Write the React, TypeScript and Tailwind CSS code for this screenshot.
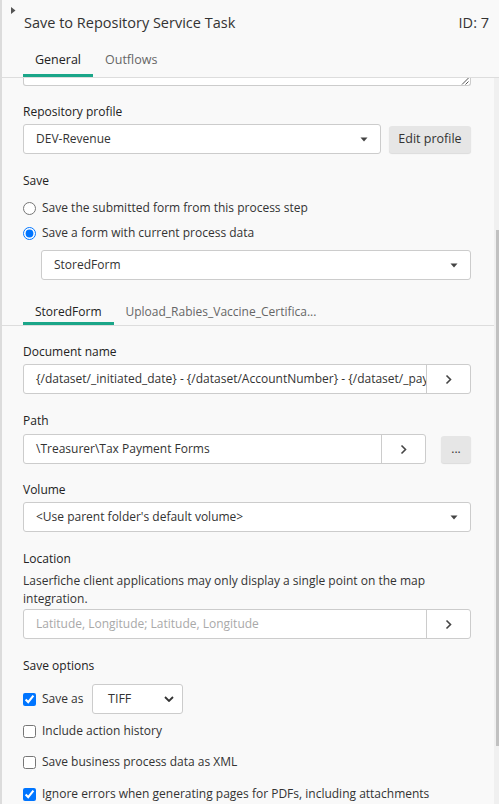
import React from "react";

const font = { fontFamily: '"Open Sans", "Noto Sans", sans-serif' };

function Caret() {
  return (
    <svg width="8" height="5" viewBox="0 0 8 5" className="shrink-0">
      <path d="M0.5 0.5 L7.5 0.5 L4 4.5 Z" fill="#444" />
    </svg>
  );
}

function Chevron() {
  return (
    <svg width="7" height="11" viewBox="0 0 7 11">
      <path d="M1.5 1.5 L5.5 5.5 L1.5 9.5" fill="none" stroke="#444" strokeWidth="1.6" />
    </svg>
  );
}

function Select({ value, className = "" }: { value: string; className?: string }) {
  return (
    <div
      className={`flex h-[30px] items-center justify-between rounded-[3px] border border-[#cccccc] bg-white pl-[12px] pr-[12px] text-[12px] text-[#333] ${className}`}
    >
      <span>{value}</span>
      <Caret />
    </div>
  );
}

function InputBtn({ value, placeholder }: { value?: string; placeholder?: string }) {
  return (
    <div className="flex h-[30px] rounded-[3px] border border-[#cccccc] bg-white text-[12px]">
      <div className="flex min-w-0 flex-1 items-center overflow-hidden whitespace-nowrap pl-[12px]">
        {value ? (
          <span className="text-[#333]">{value}</span>
        ) : (
          <span className="text-[#a9a9a9]">{placeholder}</span>
        )}
      </div>
      <div className="flex w-[44px] shrink-0 items-center justify-center border-l border-[#cccccc]">
        <Chevron />
      </div>
    </div>
  );
}

function Label({ children }: { children: React.ReactNode }) {
  return <div className="text-[12px] leading-[18px] text-[#222]">{children}</div>;
}

function Check({ checked }: { checked?: boolean }) {
  return (
    <input
      type="checkbox"
      defaultChecked={checked}
      className="m-0 h-[13px] w-[13px] shrink-0 accent-[#0075ff]"
    />
  );
}

export default function App() {
  return (
    <div
      style={font}
      className="flex h-[804px] w-full flex-col overflow-hidden border-l-2 border-[#dcdcdc] bg-[#f9f9f9] text-[#333]"
    >
      {/* header */}
      <div className="relative h-[78px] shrink-0 border-b border-[#dddddd]">
        <svg width="5" height="7" viewBox="0 0 5 7" className="absolute left-[9px] top-[7px]">
          <path d="M0 0 L4.5 3.5 L0 7 Z" fill="#555" />
        </svg>
        <div className="flex items-center justify-between pl-[22px] pr-[10px] pt-[12px] text-[14.5px] leading-[22px] text-[#333]">
          <span>Save to Repository Service Task</span>
          <span>ID: 7</span>
        </div>
        <div className="mt-[17px] flex pl-[21px] text-[12.5px] leading-[18px]">
          <div className="border-b-[3px] border-[#1ba689] px-[12px] pb-[5px] text-[#222]">General</div>
          <div className="px-[12px] pb-[5px] text-[#666]">Outflows</div>
        </div>
      </div>

      {/* body */}
      <div className="flex min-h-0 flex-1">
        <div className="min-w-0 flex-1">
          <div className="pl-[21px] pr-[23px]">
            <div className="relative h-[8px] rounded-b-[3px] border-x border-b border-[#cccccc] bg-white">
              <svg width="9" height="7" viewBox="0 0 9 7" className="absolute right-[1px] top-0">
                <path d="M2 6.5 L8.5 0 M5.5 6.5 L8.5 3.5" stroke="#555" strokeWidth="1" />
              </svg>
            </div>

            <div className="mt-[17px]">
              <Label>Repository profile</Label>
              <div className="mt-[3px] flex items-center gap-[8px]">
                <Select value="DEV-Revenue" className="flex-1" />
                <button className="h-[27px] w-[82px] rounded-[3px] bg-[#e6e6e6] text-[12.5px] text-[#333] shadow-[0_1px_1px_rgba(0,0,0,0.12)]">
                  Edit profile
                </button>
              </div>
            </div>

            <div className="mt-[18px]">
              <Label>Save</Label>
              <div className="mt-[9px] flex items-center gap-[6px] text-[12px] leading-[18px]">
                <input type="radio" name="s" className="m-0 h-[13px] w-[13px] accent-[#0075ff]" />
                <span>Save the submitted form from this process step</span>
              </div>
              <div className="mt-[7px] flex items-center gap-[6px] text-[12px] leading-[18px]">
                <input type="radio" name="s" defaultChecked className="m-0 h-[13px] w-[13px] accent-[#0075ff]" />
                <span>Save a form with current process data</span>
              </div>
              <div className="mt-[8px] pl-[18px]">
                <Select value="StoredForm" className="h-[29px]" />
              </div>
            </div>
          </div>

          <div className="mt-[23px] flex border-b border-[#dddddd] pl-[21px] text-[12px] leading-[18px]">
            <div className="border-b-[3px] border-[#1ba689] px-[12px] pb-[1px] text-[#222]">StoredForm</div>
            <div className="px-[12px] pb-[1px] text-[#666]">Upload_Rabies_Vaccine_Certifica...</div>
          </div>

          <div className="pl-[21px] pr-[23px]">
            <div className="mt-[17px]">
              <Label>Document name</Label>
              <div className="mt-[3px]">
                <InputBtn value="{/dataset/_initiated_date} - {/dataset/AccountNumber} - {/dataset/_payment_date}" />
              </div>
            </div>

            <div className="mt-[18px]">
              <Label>Path</Label>
              <div className="mt-[4px] flex items-center gap-[15px]">
                <div className="flex-1">
                  <InputBtn value="\Treasurer\Tax Payment Forms" />
                </div>
                <button className="h-[27px] w-[30px] rounded-[3px] bg-[#e6e6e6] text-[12px] leading-[12px] text-[#333] shadow-[0_1px_1px_rgba(0,0,0,0.12)]">
                  ...
                </button>
              </div>
            </div>

            <div className="mt-[17px]">
              <Label>Volume</Label>
              <div className="mt-[3px]">
                <Select value="<Use parent folder's default volume>" />
              </div>
            </div>

            <div className="mt-[18px]">
              <Label>Location</Label>
              <div className="mt-[4px] text-[12px] leading-[18px] text-[#333]">
                Laserfiche client applications may only display a single point on the map integration.
              </div>
              <div className="mt-[1px]">
                <InputBtn placeholder="Latitude, Longitude; Latitude, Longitude" />
              </div>
            </div>

            <div className="mt-[18px]">
              <Label>Save options</Label>
              <div className="mt-[9px] flex items-center text-[12px]">
                <Check checked />
                <span className="ml-[6px] w-[44px]">Save as</span>
                <div className="ml-[6px] flex h-[30px] w-[91px] items-center justify-between rounded-[3px] border border-[#cccccc] bg-white pl-[15px] pr-[8px] text-[12.5px]">
                  <span>TIFF</span>
                  <svg width="10" height="6" viewBox="0 0 10 6">
                    <path d="M1 1 L5 5 L9 1" fill="none" stroke="#333" strokeWidth="1.8" />
                  </svg>
                </div>
              </div>
              <div className="mt-[8px] flex items-center gap-[6px] text-[12px] leading-[18px]">
                <Check />
                <span>Include action history</span>
              </div>
              <div className="mt-[13px] flex items-center gap-[6px] text-[12px] leading-[18px]">
                <Check />
                <span>Save business process data as XML</span>
              </div>
              <div className="mt-[14px] flex items-center gap-[6px] text-[12px] leading-[18px]">
                <Check checked />
                <span>Ignore errors when generating pages for PDFs, including attachments</span>
              </div>
            </div>
          </div>
        </div>
        <div className="relative w-[5px] shrink-0 bg-[#f0f0f0]">
          <div className="absolute right-0 top-[152px] h-[516px] w-[3px] bg-[#c1c1c1]" />
        </div>
      </div>
    </div>
  );
}
